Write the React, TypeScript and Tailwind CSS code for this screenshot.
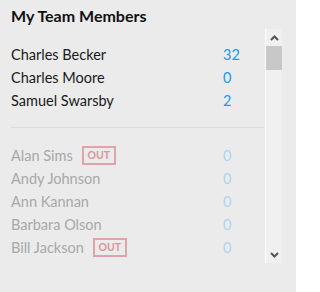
const active = [
  { name: "Charles Becker", count: 32 },
  { name: "Charles Moore", count: 0 },
  { name: "Samuel Swarsby", count: 2 },
];

const inactive = [
  { name: "Alan Sims", count: 0, out: true },
  { name: "Andy Johnson", count: 0, out: false },
  { name: "Ann Kannan", count: 0, out: false },
  { name: "Barbara Olson", count: 0, out: false },
  { name: "Bill Jackson", count: 0, out: true },
];

function OutBadge() {
  return (
    <span className="ml-[9px] inline-flex h-[19px] w-[34px] items-center justify-center border-2 border-[#dea3ab] text-[10.5px] font-bold text-[#d8959e]">
      OUT
    </span>
  );
}

export default function App() {
  return (
    <div className="h-[292px] w-[296px] bg-[#ebebeb] font-['Lato','Liberation_Sans',sans-serif] text-[14.5px]">
      <h2 className="px-[11px] pt-[6px] text-[16px] font-bold leading-[20px] text-[#111]">My Team Members</h2>
      <div className="mt-[3px] flex h-[234px]">
        <div className="flex-1 overflow-hidden pl-[11px] pt-[14px]">
          {active.map((m) => (
            <div key={m.name} className="flex h-[23px] items-center text-[#1a1a1a]">
              <span className="flex-1">{m.name}</span>
              <span className="w-[42px] text-[#2196f3]">{m.count}</span>
            </div>
          ))}
          <div className="mb-[16px] mr-[1px] mt-[15px] h-px bg-[#dcdcdc]" />
          {inactive.map((m) => (
            <div key={m.name} className="flex h-[23px] items-center text-[#a8a8a8]">
              <span className="flex flex-1 items-center">
                {m.name}
                {m.out && <OutBadge />}
              </span>
              <span className="w-[42px] text-[#acd6f3]">{m.count}</span>
            </div>
          ))}
        </div>
        <div className="flex w-[17px] flex-col border-l border-white bg-[#f0f0f0]">
          <div className="flex h-[17px] items-center justify-center">
            <svg width="9" height="6" viewBox="0 0 9 6">
              <path d="M1 5 L4.5 1.5 L8 5" fill="none" stroke="#555" strokeWidth="2" />
            </svg>
          </div>
          <div className="h-[24px] bg-[#c8c8c8]" />
          <div className="flex-1" />
          <div className="flex h-[17px] items-center justify-center">
            <svg width="9" height="6" viewBox="0 0 9 6">
              <path d="M1 1 L4.5 4.5 L8 1" fill="none" stroke="#555" strokeWidth="2" />
            </svg>
          </div>
        </div>
        <div className="w-[14px]" />
      </div>
    </div>
  );
}
